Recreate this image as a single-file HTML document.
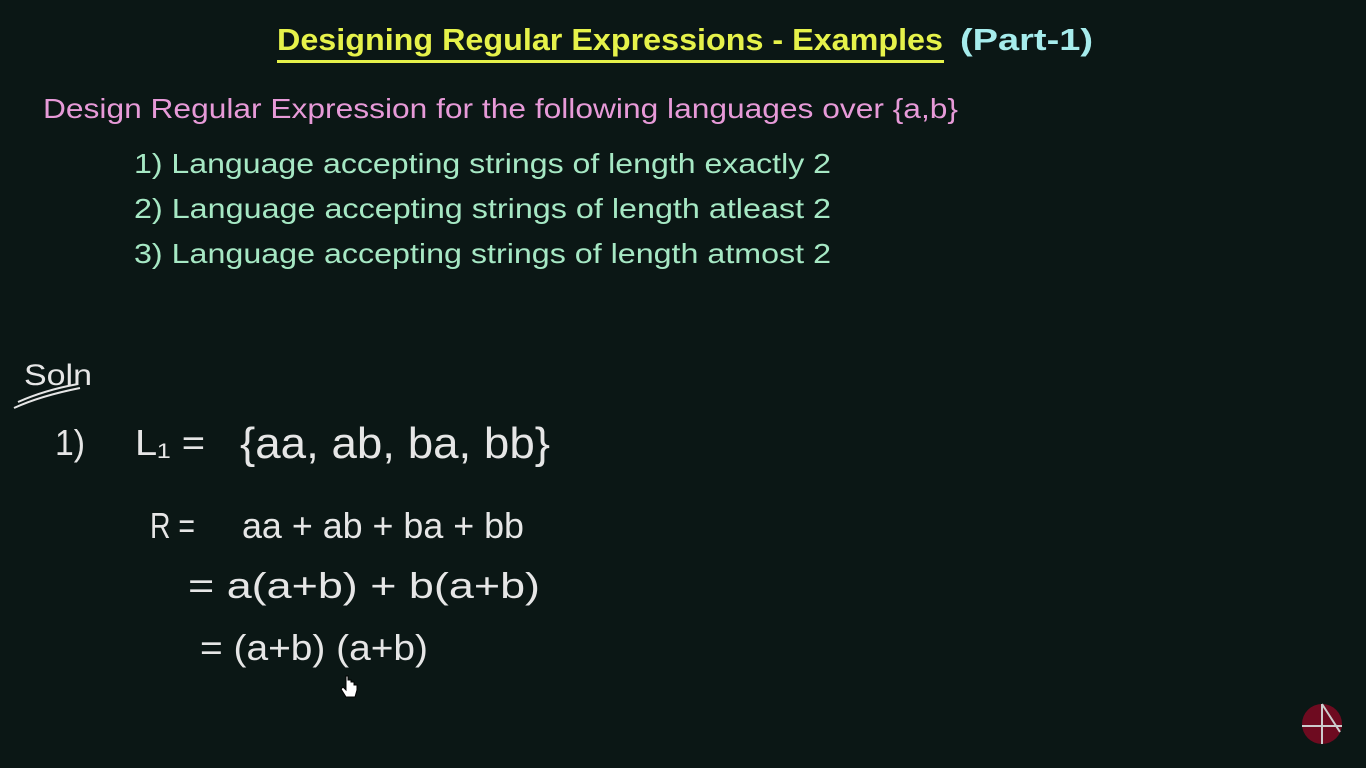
<!DOCTYPE html>
<html><head><meta charset="utf-8"><style>
html,body{margin:0;padding:0;background:#0b1715;width:1366px;height:768px;overflow:hidden}
svg{display:block}
text{font-family:"Liberation Sans",sans-serif}
</style></head><body>
<svg width="1366" height="768" viewBox="0 0 1366 768">
<rect width="1366" height="768" fill="#0b1715"/>
<text x="277" y="50" font-size="31" font-weight="bold" fill="#e6f24a" textLength="666" lengthAdjust="spacingAndGlyphs">Designing Regular Expressions - Examples</text>
<rect x="277" y="60" width="667" height="3" fill="#e6f24a"/>
<text x="960" y="50" font-size="31" font-weight="bold" fill="#a6ecec" textLength="133" lengthAdjust="spacingAndGlyphs">(Part-1)</text>
<text x="43" y="118" font-size="28" fill="#e79ad8" textLength="915" lengthAdjust="spacingAndGlyphs">Design Regular Expression for the following languages over {a,b}</text>
<g font-size="28" fill="#a6e8c4">
<text x="134" y="173" textLength="697" lengthAdjust="spacingAndGlyphs">1) Language accepting strings of length exactly 2</text>
<text x="134" y="218" textLength="697" lengthAdjust="spacingAndGlyphs">2) Language accepting strings of length atleast 2</text>
<text x="134" y="263" textLength="697" lengthAdjust="spacingAndGlyphs">3) Language accepting strings of length atmost 2</text>
</g>
<g fill="#e6e6e6" font-family="Liberation Sans" font-size="36">
<text x="24" y="385" font-size="30" textLength="68" lengthAdjust="spacingAndGlyphs">Soln</text>
<path d="M14 408 Q40 396 80 388 M18 402 Q45 390 78 384" stroke="#e6e6e6" stroke-width="2" fill="none"/>
<text x="55" y="455" textLength="30" lengthAdjust="spacingAndGlyphs">1)</text>
<text x="135" y="455" textLength="70" lengthAdjust="spacingAndGlyphs">L₁ =</text>
<text x="240" y="458" font-size="44" textLength="310" lengthAdjust="spacingAndGlyphs">{aa, ab, ba, bb}</text>
<text x="150" y="538" textLength="45" lengthAdjust="spacingAndGlyphs">R =</text>
<text x="242" y="538" textLength="282" lengthAdjust="spacingAndGlyphs">aa + ab + ba + bb</text>
<text x="188" y="598" textLength="352" lengthAdjust="spacingAndGlyphs">=  a(a+b) + b(a+b)</text>
<text x="200" y="660" textLength="228" lengthAdjust="spacingAndGlyphs">= (a+b) (a+b)</text>
</g>
<path d="M346 676 v14 l-3-3 -2 2 5 8 h9 l2-7 v-5 h-3 v-3 h-3 v-2 h-3 v-4 z" fill="#fff" stroke="#000" stroke-width="1"/>
<circle cx="1322" cy="724" r="20" fill="#6e0b20"/>
<path d="M1302 726 H1342 M1322 704 V744 M1322 704 L1340 732" stroke="#ccc" stroke-width="2" fill="none"/>
</svg>
</body></html>
